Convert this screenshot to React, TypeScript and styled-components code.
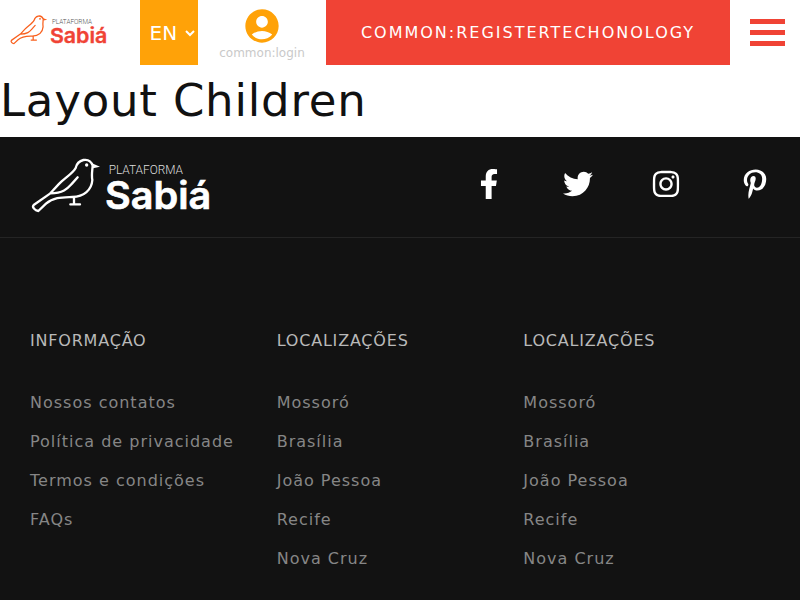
import React from "react";
import styled, { createGlobalStyle } from "styled-components";
import { MdAccountCircle } from "react-icons/md";
import { FaFacebookF, FaTwitter, FaInstagram, FaPinterestP } from "react-icons/fa";

const GlobalStyle = createGlobalStyle`
  *, *::before, *::after { box-sizing: border-box; margin: 0; padding: 0; }
  body {
    background: #fff;
    color: #111;
    font-family: "DejaVu Sans", sans-serif;
    letter-spacing: 1px;
    overflow: hidden;
  }
`;

const Header = styled.header`
  display: flex;
  height: 65px;
  background: #fff;
`;

const HeaderLogo = styled.a`
  width: 140px;
  padding: 8px 0 0 4px;
`;

const LogoSvg = styled.svg<{ $width: number }>`
  display: block;
  width: ${(p) => p.$width}px;
  height: ${(p) => p.$width * 0.4}px;
`;

const Language = styled.button`
  display: flex;
  align-items: center;
  justify-content: space-between;
  width: 58px;
  padding: 1px 3px 0 9.5px;
  border: 0;
  background: #ffa208;
  color: #fff;
  font: 20px "DejaVu Sans", sans-serif;
`;

const Login = styled.a`
  display: flex;
  flex-direction: column;
  align-items: center;
  width: 128px;
  padding-top: 6px;
  color: #ffa208;
`;

const LoginLabel = styled.span`
  color: #c9c9c9;
  font-size: 12px;
  line-height: 14px;
  letter-spacing: 0;
`;

const Register = styled.button`
  width: 404px;
  border: 0;
  background: #f04335;
  color: #fff;
  font: 16px "DejaVu Sans", sans-serif;
  letter-spacing: 2px;
  text-transform: uppercase;
`;

const Menu = styled.button`
  display: flex;
  flex: 1;
  flex-direction: column;
  justify-content: center;
  gap: 6px;
  padding: 0 15px 0 20px;
  border: 0;
  background: #fff;
`;

const MenuBar = styled.span`
  height: 5px;
  background: #f04335;
`;

const Title = styled.h1`
  height: 72px;
  font-size: 45px;
  font-weight: 400;
  line-height: 72px;
  letter-spacing: 0.8px;
`;

const Footer = styled.footer`
  min-height: 463px;
  background: #121212;
`;

const FooterTop = styled.div`
  display: flex;
  align-items: flex-start;
  justify-content: space-between;
  height: 101px;
  padding: 8px 30px 0 20px;
  border-bottom: 1px solid #242424;
`;

const Social = styled.nav`
  display: flex;
  gap: 58.67px;
  padding-top: 24px;
  color: #fff;
`;

const Columns = styled.div`
  display: grid;
  grid-template-columns: repeat(3, 1fr);
  padding: 93px 30px 0;
`;

const ColumnTitle = styled.h2`
  margin-bottom: 43px;
  color: #b9b9b9;
  font-size: 16px;
  font-weight: 400;
  line-height: 19px;
  letter-spacing: 0.8px;
  text-transform: uppercase;
`;

const Links = styled.ul`
  display: grid;
  gap: 20px;
  list-style: none;
`;

const LinkItem = styled.li`
  color: #868686;
  font-size: 16px;
  line-height: 19px;
  white-space: nowrap;
`;

type LogoProps = { width: number; bird: string; name: string; tagline: string };

function Logo({ width, bird, name, tagline }: LogoProps) {
  return (
    <LogoSvg $width={width} viewBox="0 0 600 240" role="img" aria-label="Plataforma Sabiá">
      <g fill="none" stroke={bird} strokeWidth="7" strokeLinecap="round" strokeLinejoin="round">
        <path d="M218 62C213 47 201 43 190 45C177 48 170 56 167 69C158 86 134 99 115 119L91 145L41 180C35 186 45 197 55 198L78 176C102 155 130 157 157 156C192 155 215 135 217 105C214 90 217 76 218 62M91 145C132 145 143 130 156 116L173 97M162 157V178M151 178H180" />
      </g>
      <path d="M216 55L240 65L219 70Z" fill={bird} />
      <circle cx="200" cy="60" r="5" fill={bird} />
      <text x="266" y="87" fill={tagline} fontFamily="Roboto" fontWeight="300" fontSize="36" letterSpacing="0" textLength="223" lengthAdjust="spacingAndGlyphs">PLATAFORMA</text>
      <text x="255" y="192" fill={name} stroke={name} strokeWidth="2" fontFamily="Inter" fontWeight="600" fontSize="114" letterSpacing="0" textLength="319" lengthAdjust="spacingAndGlyphs">Sabiá</text>
    </LogoSvg>
  );
}

const cities = ["Mossoró", "Brasília", "João Pessoa", "Recife", "Nova Cruz"];
const columns = [
  { title: "Informação", links: ["Nossos contatos", "Política de privacidade", "Termos e condições", "FAQs"] },
  { title: "Localizações", links: cities },
  { title: "Localizações", links: cities },
];

export default function App() {
  return (
    <>
      <GlobalStyle />
      <Header>
        <HeaderLogo>
          <Logo width={108} bird="#f9601e" name="#f04335" tagline="#555" />
        </HeaderLogo>
        <Language>
          EN
          <svg width="10" height="7" viewBox="0 0 10 7" fill="none" stroke="#fff" strokeWidth="2">
            <path d="M1 1L5 5L9 1" />
          </svg>
        </Language>
        <Login>
          <MdAccountCircle size={40} />
          <LoginLabel>common:login</LoginLabel>
        </Login>
        <Register>common:registerTechonology</Register>
        <Menu aria-label="Menu">
          <MenuBar />
          <MenuBar />
          <MenuBar />
        </Menu>
      </Header>
      <Title>Layout Children</Title>
      <Footer>
        <FooterTop>
          <Logo width={200} bird="#fff" name="#fff" tagline="#ddd" />
          <Social>
            <FaFacebookF size={30} />
            <FaTwitter size={30} />
            <FaInstagram size={30} />
            <FaPinterestP size={30} />
          </Social>
        </FooterTop>
        <Columns>
          {columns.map((column, index) => (
            <section key={index}>
              <ColumnTitle>{column.title}</ColumnTitle>
              <Links>
                {column.links.map((link) => (
                  <LinkItem key={link}>{link}</LinkItem>
                ))}
              </Links>
            </section>
          ))}
        </Columns>
      </Footer>
    </>
  );
}
